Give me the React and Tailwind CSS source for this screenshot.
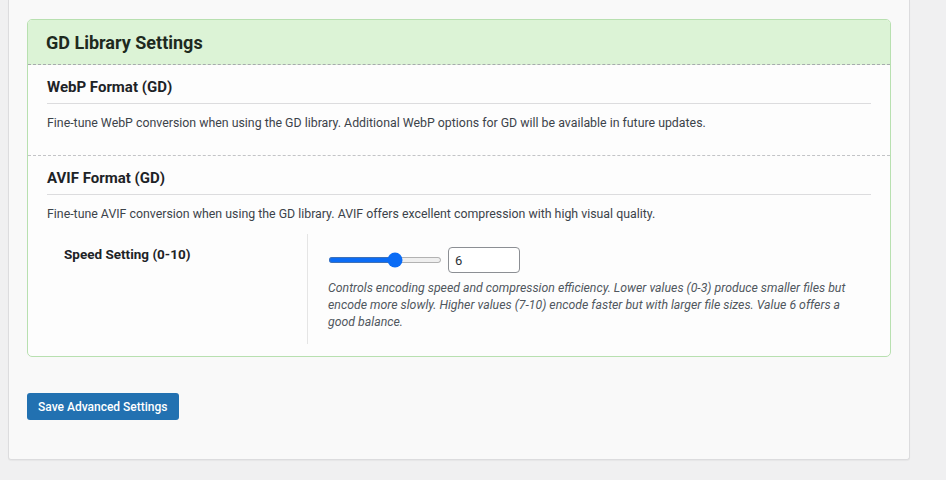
import { useState } from "react";

const font = { fontFamily: "Roboto, 'Liberation Sans', sans-serif" };

function FormatSection({ title, children, last }) {
  return (
    <div className={last ? "px-[19px] pt-[12px]" : "px-[19px] pt-[12px] pb-[24px] border-b border-dashed border-[#c3c4c7]"}>
      <h3 className="text-[15px] leading-[20px] font-bold text-[#1d2327] pb-[6px] border-b border-[#dcdcde]">{title}</h3>
      <div className="pt-[11px] text-[12.35px] text-[#3c434a] leading-[16px]">{children}</div>
    </div>
  );
}

export default function App() {
  const [speed, setSpeed] = useState(6);

  return (
    <div className="min-h-[480px] bg-[#f0f0f1] pr-[36px] pl-[8px]" style={font}>
      <div className="bg-[#f9f9f9] border border-t-0 border-[#dcdcde] rounded-b-[3px] px-[18px] pt-[19px] pb-[39px] shadow-[0_1px_1px_rgba(0,0,0,0.04)]">
        <div className="border border-[#b8e0b0] rounded-[5px] bg-[#fdfdfd] overflow-hidden">
          <div className="bg-[#dcf3d6] h-[45px] flex items-center px-[18px] border-b border-dashed border-[#a7aaad]">
            <h2 className="text-[18px] font-bold text-[#1e2a1e]">GD Library Settings</h2>
          </div>

          <FormatSection title="WebP Format (GD)">
            Fine-tune WebP conversion when using the GD library. Additional WebP options for GD will be available in future updates.
          </FormatSection>

          <FormatSection title="AVIF Format (GD)" last>
            Fine-tune AVIF conversion when using the GD library. AVIF offers excellent compression with high visual quality.
          </FormatSection>

          <div className="flex px-[19px] pt-[12px] pb-[12px]">
            <div className="w-[261px] border-r border-[#e5e5e5] pl-[17px] pt-[8px]">
              <span className="text-[13.5px] leading-[20px] font-bold text-[#1d2327]">Speed Setting (0-10)</span>
            </div>
            <div className="flex-1 pl-[20px] pt-[13px] pb-[13px] pr-[20px]">
              <div className="flex items-center gap-[6px]">
                <input
                  type="range"
                  min="0"
                  max="10"
                  value={speed}
                  onChange={(e) => setSpeed(e.target.value)}
                  className="w-[114px] h-[6px] accent-[#0b6cf5]"
                />
                <input
                  type="number"
                  value={speed}
                  onChange={(e) => setSpeed(e.target.value)}
                  className="w-[72px] h-[26px] border border-[#8c8f94] rounded-[4px] bg-white px-[6px] text-[13px] text-[#2c3338] outline-none"
                />
              </div>
              <p className="mt-[7px] text-[12.3px] italic leading-[17px] text-[#50575e] max-w-[530px]">
                Controls encoding speed and compression efficiency. Lower values (0-3) produce smaller files but encode more slowly. Higher values (7-10) encode faster but with larger file sizes. Value 6 offers a good balance.
              </p>
            </div>
          </div>
        </div>

        <button className="mt-[36px] h-[27px] px-[11px] bg-[#2271b1] text-white text-[12px] font-medium rounded-[3px]">
          Save Advanced Settings
        </button>
      </div>
    </div>
  );
}
